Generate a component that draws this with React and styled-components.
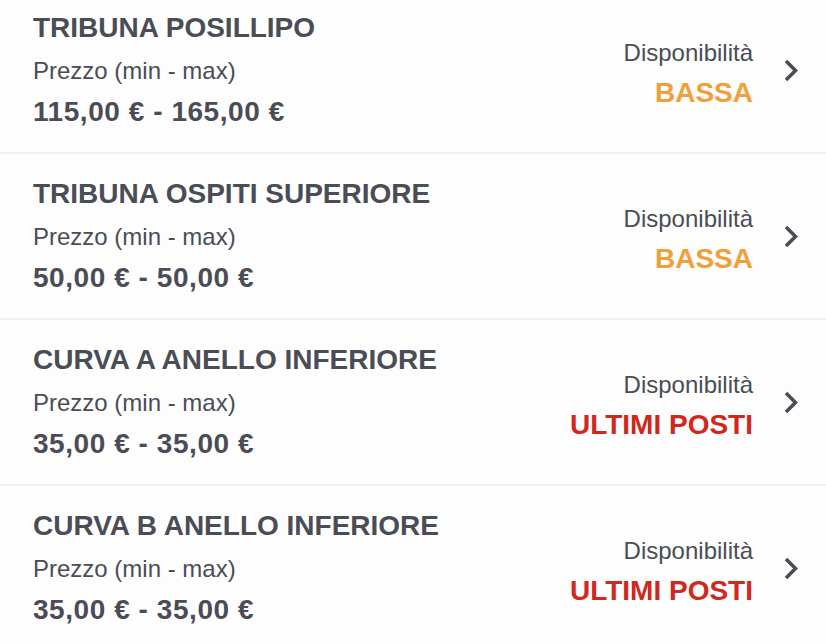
import React from "react";
import styled, { createGlobalStyle } from "styled-components";

const Global = createGlobalStyle`
  html, body { margin: 0; padding: 0; background: #fdfdfd; }
  body { font-family: "Liberation Sans", Arial, Helvetica, sans-serif; overflow: hidden; }
`;

const List = styled.div`
  display: flex;
  flex-direction: column;
  margin-top: -12px;
  background: #fdfdfd;
`;

const Row = styled.div`
  display: flex;
  align-items: center;
  justify-content: space-between;
  height: 164px;
  box-sizing: content-box;
  padding: 0 27px 0 33px;
  border-bottom: 2px solid #efefef;
`;

const Left = styled.div`
  display: flex;
  flex-direction: column;
  color: #4a4d55;
`;

const Title = styled.div`
  font-size: 28px;
  font-weight: 700;
  line-height: 42px;
  white-space: nowrap;
`;

const Label = styled.div`
  font-size: 24px;
  font-weight: 400;
  line-height: 42px;
  margin-top: 1px;
  white-space: nowrap;
`;

const Price = styled.div`
  font-size: 28px;
  font-weight: 700;
  line-height: 42px;
  margin-top: -1px;
  letter-spacing: 0.55px;
  white-space: nowrap;
`;

const Right = styled.div`
  display: flex;
  align-items: center;
  gap: 32px;
`;

const Availability = styled.div`
  display: flex;
  flex-direction: column;
  align-items: flex-end;
  margin-top: 6px;
`;

const AvailLabel = styled.div`
  font-size: 24px;
  line-height: 42px;
  color: #4a4d55;
`;

const AvailValue = styled.div`
  font-size: 28px;
  font-weight: 700;
  line-height: 42px;
  margin-top: -2px;
  color: ${(p) => (p.$level === "low" ? "#f0a03a" : "#d0281f")};
  white-space: nowrap;
`;

const Chevron = styled.svg`
  width: 14px;
  height: 23px;
  flex: none;
  display: block;
  margin-left: -1px;
  margin-right: 1px;
`;

const rows = [
  { name: "TRIBUNA POSILLIPO", price: "115,00 € - 165,00 €", level: "low", text: "BASSA" },
  { name: "TRIBUNA OSPITI SUPERIORE", price: "50,00 € - 50,00 €", level: "low", text: "BASSA" },
  { name: "CURVA A ANELLO INFERIORE", price: "35,00 € - 35,00 €", level: "last", text: "ULTIMI POSTI" },
  { name: "CURVA B ANELLO INFERIORE", price: "35,00 € - 35,00 €", level: "last", text: "ULTIMI POSTI" },
];

export default function App() {
  return (
    <>
      <Global />
      <List>
        {rows.map((r) => (
          <Row key={r.name}>
            <Left>
              <Title>{r.name}</Title>
              <Label>Prezzo (min - max)</Label>
              <Price>{r.price}</Price>
            </Left>
            <Right>
              <Availability>
                <AvailLabel>Disponibilità</AvailLabel>
                <AvailValue $level={r.level}>{r.text}</AvailValue>
              </Availability>
              <Chevron viewBox="0 0 14 23">
                <path d="M2 2 L11.5 11.5 L2 21" fill="none" stroke="#4a4d55" strokeWidth="3.6" strokeLinecap="butt" strokeLinejoin="miter" />
              </Chevron>
            </Right>
          </Row>
        ))}
      </List>
    </>
  );
}
